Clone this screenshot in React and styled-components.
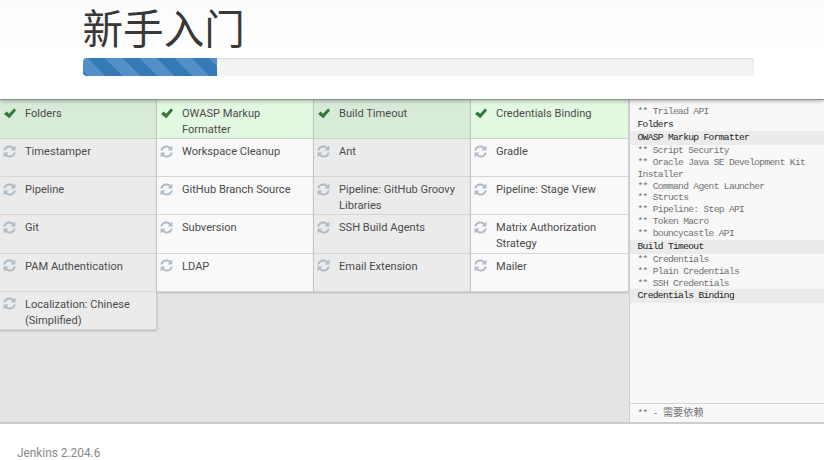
import React from "react";
import styled, { createGlobalStyle } from "styled-components";

const Global = createGlobalStyle`
  * { box-sizing: border-box; }
  html, body { margin: 0; background: #fff; }
  body { font-family: Roboto, "Noto Sans CJK SC", sans-serif; overflow: hidden; }
`;

const Page = styled.div`
  display: flex;
  flex-direction: column;
  width: 824px;
  height: 460px;
`;

const Header = styled.header`
  position: relative;
  z-index: 1;
  flex: none;
  height: 100px;
  padding: 0 70px 0 83px;
  background: linear-gradient(#fcfcfc, #fff 60px);
  border-bottom: 1px solid #8e8e8e;
  box-shadow: 0 1px 4px rgba(0, 0, 0, 0.3);
`;

const Title = styled.h1`
  margin: 0 0 0 -0.5px;
  height: 58px;
  font: 400 40.6px/61px Roboto, "Noto Sans CJK SC", sans-serif;
  color: #383838;
  white-space: nowrap;
`;

const Track = styled.div`
  height: 18px;
  border-radius: 4px;
  overflow: hidden;
  background: #f3f3f3;
  box-shadow: inset 0 1px 2px rgba(0, 0, 0, 0.1);
`;

const Bar = styled.div`
  width: 20%;
  height: 100%;
  background: repeating-linear-gradient(
    45deg,
    #337ab7 0 3.6px,
    #5490c8 3.6px 15.9px,
    #337ab7 15.9px 24.54px
  );
`;

const Body = styled.main`
  flex: none;
  display: flex;
  height: 324px;
  background: #e4e4e4;
  border-bottom: 2px solid #cdcdcd;
`;

const Plugins = styled.section`
  flex: 1;
  display: flex;
  align-items: flex-start;
`;

const Column = styled.div`
  width: ${(p) => p.$width}px;
  background: ${(p) => (p.$shaded ? "#ebebeb" : "#f9f9f9")};
  border-right: 1px solid #cfcfcf;
  box-shadow: 0 1px 2px rgba(0, 0, 0, 0.2);
`;

const Plugin = styled.div`
  display: flex;
  height: ${(p) => (p.$done ? 39 : 38.2)}px;
  padding: ${(p) => (p.$done ? 6 : 5)}px 0 0 3.4px;
  border-bottom: 1px solid #d6d6d6;
  background: ${(p) => (p.$done ? (p.$shaded ? "#d8ebd8" : "#e3f8e1") : "transparent")};
  ${(p) => p.$done && "border-bottom-color: #c4d6c4;"}
`;

const Name = styled.span`
  margin-left: 8.6px;
  font-size: 11.1px;
  line-height: 16px;
  color: #4b4b4b;
  white-space: pre;
`;

const Icon = styled.svg`
  flex: none;
  width: 13px;
  height: 13px;
  margin-top: ${(p) => p.$top}px;
  fill: ${(p) => p.$color};
`;

const Log = styled.aside`
  flex: none;
  display: flex;
  flex-direction: column;
  width: 195px;
  background: #f8f8f8;
  border-left: 1px solid #cfcfcf;
  font-family: "Liberation Mono", "Noto Sans CJK SC", monospace;
  font-size: 9.6px;
  letter-spacing: -0.68px;
  color: #727272;
`;

const Lines = styled.div`
  flex: 1;
  padding-top: 6px;
`;

const Line = styled.div`
  padding-left: 7.5px;
  line-height: 11.9px;
  white-space: pre;
`;

const Heading = styled(Line)`
  height: ${(p) => (p.$plain ? 13.2 : 13.7)}px;
  line-height: 13.7px;
  color: #222;
  background: ${(p) => (p.$plain ? "transparent" : "#ebebeb")};
`;

const Legend = styled.div`
  height: 19px;
  padding-left: 7.5px;
  border-top: 1px solid #d4d4d4;
  line-height: 19px;
`;

const Chinese = styled.span`
  font-size: 10.2px;
  letter-spacing: 0;
`;

const Footer = styled.footer`
  padding: 21px 17px 0;
  font-size: 11.85px;
  line-height: 16px;
  color: #888;
`;

const Check = () => (
  <Icon viewBox="0 0 13 13" $color="#36783a" $top={1}>
    <path d="M1 6.9 3.6 4.4 6.1 6.7 11.2 1.3 13 3.4 6.3 11.3Z" />
  </Icon>
);

const Refresh = () => (
  <Icon viewBox="0 0 13 13" $color="#afbbc7" $top={0.5}>
    <path d="M.3 5.6C.8 2.500 3.300.5 6.400.5c1.700 0 3.200.7 4.300 1.700L12.400.6v4.900H7.500l1.800-1.800c-.8-.8-1.800-1.200-2.900-1.200-2 0-3.600 1.200-4.100 3.100Z" />
    <path d="M12.700 7.400c-.5 3.100-3 5.100-6.100 5.100-1.700 0-3.200-.7-4.300-1.700L.6 12.400V7.500h4.900L3.700 9.300c.8.8 1.800 1.200 2.900 1.200 2 0 3.600-1.200 4.100-3.100Z" />
  </Icon>
);

const columns = [
  { width: 157, items: ["Folders", "Timestamper", "Pipeline", "Git", "PAM Authentication", "Localization: Chinese\n(Simplified)"] },
  { width: 157, items: ["OWASP Markup\nFormatter", "Workspace Cleanup", "GitHub Branch Source", "Subversion", "LDAP"] },
  { width: 157, items: ["Build Timeout", "Ant", "Pipeline: GitHub Groovy\nLibraries", "SSH Build Agents", "Email Extension"] },
  { width: 158, items: ["Credentials Binding", "Gradle", "Pipeline: Stage View", "Matrix Authorization\nStrategy", "Mailer"] },
];

const log = [
  "** Trilead API",
  "Folders",
  "OWASP Markup Formatter",
  "** Script Security",
  "** Oracle Java SE Development Kit\nInstaller",
  "** Command Agent Launcher",
  "** Structs",
  "** Pipeline: Step API",
  "** Token Macro",
  "** bouncycastle API",
  "Build Timeout",
  "** Credentials",
  "** Plain Credentials",
  "** SSH Credentials",
  "Credentials Binding",
];

export default function App() {
  return (
    <Page>
      <Global />
      <Header>
        <Title>新手入门</Title>
        <Track>
          <Bar />
        </Track>
      </Header>
      <Body>
        <Plugins>
          {columns.map((col, c) => (
            <Column key={c} $width={col.width} $shaded={c % 2 === 0}>
              {col.items.map((name, i) => (
                <Plugin key={name} $done={i === 0} $shaded={c % 2 === 0}>
                  {i === 0 ? <Check /> : <Refresh />}
                  <Name>{name}</Name>
                </Plugin>
              ))}
            </Column>
          ))}
        </Plugins>
        <Log>
          <Lines>
            {log.map((text) =>
              text.startsWith("**") ? (
                <Line key={text}>{text}</Line>
              ) : (
                <Heading key={text} $plain={text === "Folders"}>
                  {text}
                </Heading>
              )
            )}
          </Lines>
          <Legend>
            ** - <Chinese>需要依赖</Chinese>
          </Legend>
        </Log>
      </Body>
      <Footer>Jenkins 2.204.6</Footer>
    </Page>
  );
}
